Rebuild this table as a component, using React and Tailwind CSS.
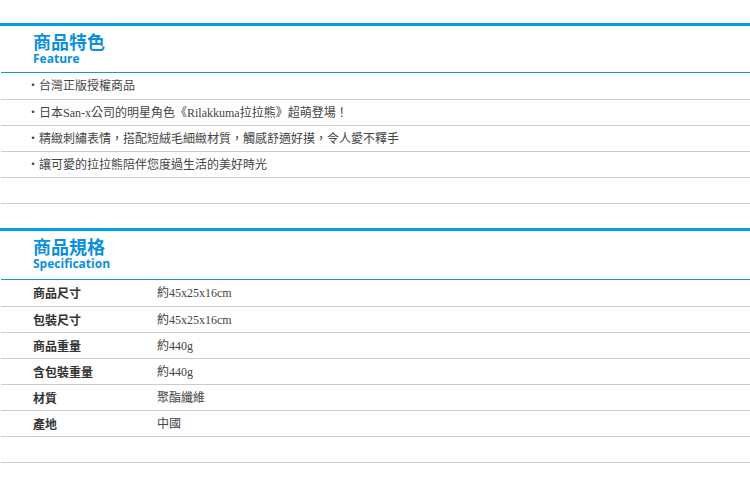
const features = [
  "台灣正版授權商品",
  "日本San-x公司的明星角色《Rilakkuma拉拉熊》超萌登場！",
  "精緻刺繡表情，搭配短絨毛細緻材質，觸感舒適好摸，令人愛不釋手",
  "讓可愛的拉拉熊陪伴您度過生活的美好時光",
];

const specs = [
  ["商品尺寸", "約45x25x16cm"],
  ["包裝尺寸", "約45x25x16cm"],
  ["商品重量", "約440g"],
  ["含包裝重量", "約440g"],
  ["材質", "聚酯纖維"],
  ["產地", "中國"],
];

const bodyFont = { fontFamily: '"Liberation Serif", "Noto Sans CJK TC", serif' };
const cjkSans = { fontFamily: '"Noto Sans CJK TC", sans-serif' };

const SectionHead = ({ title, sub, tall }) => (
  <div>
    <div className="h-[3px] bg-[#00a0e9]" />
    <div
      className={`ml-px pl-[32px] pt-[6px] border-b border-[#1b95d8] ${tall ? "h-[49px]" : "h-[47px]"}`}
    >
      <div className="text-[18px] leading-[18px] font-bold text-[#0b90db]" style={cjkSans}>
        {title}
      </div>
      <div
        className="mt-[3px] text-[12px] leading-[12px] font-bold text-[#0b90db]"
        style={{ fontFamily: '"Open Sans", sans-serif' }}
      >
        {sub}
      </div>
    </div>
  </div>
);

export default function App() {
  return (
    <div className="w-[750px] bg-white pt-[23px]" style={bodyFont}>
      {/* 商品特色 */}
      <SectionHead title="商品特色" sub="Feature" />
      <div className="ml-px">
        {features.map((f, i) => (
          <div
            key={f}
            className={`${i === 0 ? "h-[27px]" : "h-[26px]"} border-b border-[#cccccc] flex items-center pl-[26px] text-[12px] text-[#444]`}
          >
            <span className="w-[12px] shrink-0">・</span>
            <span>{f}</span>
          </div>
        ))}
        <div className="h-[26px] border-b border-[#cccccc]" />
      </div>

      <div className="h-[24px]" />

      {/* 商品規格 */}
      <SectionHead title="商品規格" sub="Specification" tall />
      <div className="ml-px">
        {specs.map(([k, v], i) => (
          <div
            key={k}
            className={`${i === 0 ? "h-[27px]" : "h-[26px]"} border-b border-[#cccccc] flex items-center text-[12px]`}
          >
            <span className="w-[156px] shrink-0 pl-[32px] font-bold text-[#333]" style={cjkSans}>
              {k}
            </span>
            <span className="text-[#444]">{v}</span>
          </div>
        ))}
        <div className="h-[26px] border-b border-[#cccccc]" />
      </div>
    </div>
  );
}
